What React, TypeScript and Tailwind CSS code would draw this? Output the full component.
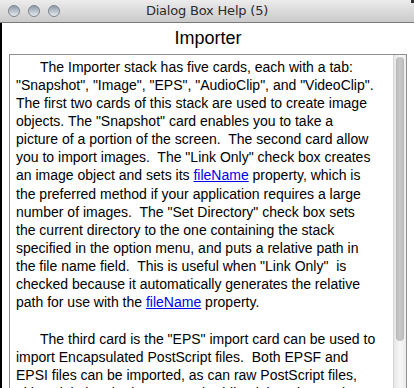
import React from "react";

const link = "inline-block leading-[19px] text-[#0000ee] underline";

function Para1() {
  return (
    <p className="whitespace-nowrap">
      <span className="pl-[24px]">The Importer stack has five cards, each with a tab:</span>
      <br />
      "Snapshot", "Image", "EPS", "AudioClip", and "VideoClip".
      <br />
      The first two cards of this stack are used to create image
      <br />
      objects. The "Snapshot" card enables you to take a
      <br />
      picture of a portion of the screen.&nbsp; The second card allow
      <br />
      you to import images.&nbsp; The "Link Only" check box creates
      <br />
      an image object and sets its <span className={link}>fileName</span> property, which is
      <br />
      the preferred method if your application requires a large
      <br />
      number of images.&nbsp; The "Set Directory" check box sets
      <br />
      the current directory to the one containing the stack
      <br />
      specified in the option menu, and puts a relative path in
      <br />
      the file name field.&nbsp; This is useful when "Link Only"&nbsp; is
      <br />
      checked because it automatically generates the relative
      <br />
      path for use with the <span className={link}>fileName</span> property.
    </p>
  );
}

function Para2() {
  return (
    <p className="whitespace-nowrap mt-[18px]">
      <span className="pl-[24px]">The third card is the "EPS" import card can be used to</span>
      <br />
      import Encapsulated PostScript files.&nbsp; Both EPSF and
      <br />
      EPSI files can be imported, as can raw PostScript files,
      <br />
      either deleting the latter or embedding it into the stack.
    </p>
  );
}

export default function App() {
  return (
    <div className="w-[414px] h-[388px] overflow-hidden bg-white flex flex-col font-['Liberation_Sans',Arial,sans-serif]">
      {/* Title bar */}
      <div className="relative h-[23px] shrink-0 bg-gradient-to-b from-[#ececec] to-[#cacaca] border-b border-[#7a7a7a] flex items-center justify-center">
        <div className="absolute left-[8px] top-[5px] flex gap-[8px]">
          {[0, 1, 2].map((i) => (
            <span
              key={i}
              className="w-[12px] h-[12px] rounded-full border border-[#7d8590] bg-gradient-to-b from-[#8e99a6] via-[#b9c3cd] to-[#e4e9ee]"
            />
          ))}
        </div>
        <span className="text-[13px] text-[#2b2b2b] font-['DejaVu_Sans',sans-serif] tracking-[-0.2px]">
          Dialog Box Help (5)
        </span>
        <span className="absolute right-0 top-0 w-[3px] h-[3px] bg-[#333]" />
      </div>

      {/* Body */}
      <div className="flex-1 flex flex-col border-l-2 border-black min-h-0">
        <h1 className="text-center text-[18px] leading-[22px] text-black mt-[4px] h-[27px]">Importer</h1>
        <div className="ml-[7px] mr-[7px] flex-1 flex border-t border-l border-r border-[#8f8f8f] min-h-0">
          <div className="flex-1 overflow-hidden pl-[6px] pt-[3px] text-[14px] leading-[18px] text-black">
            <Para1 />
            <Para2 />
          </div>
          <div className="w-[13px] shrink-0 bg-gradient-to-r from-[#e6e6e6] via-[#f7f7f7] to-[#ececec] border-l border-[#d6d6d6] pt-[2px] px-[2px]">
            <div className="w-full h-[284px] rounded-full bg-gradient-to-r from-[#b8b8b8] via-[#c9c9c9] to-[#b8b8b8]" />
          </div>
        </div>
      </div>
    </div>
  );
}
